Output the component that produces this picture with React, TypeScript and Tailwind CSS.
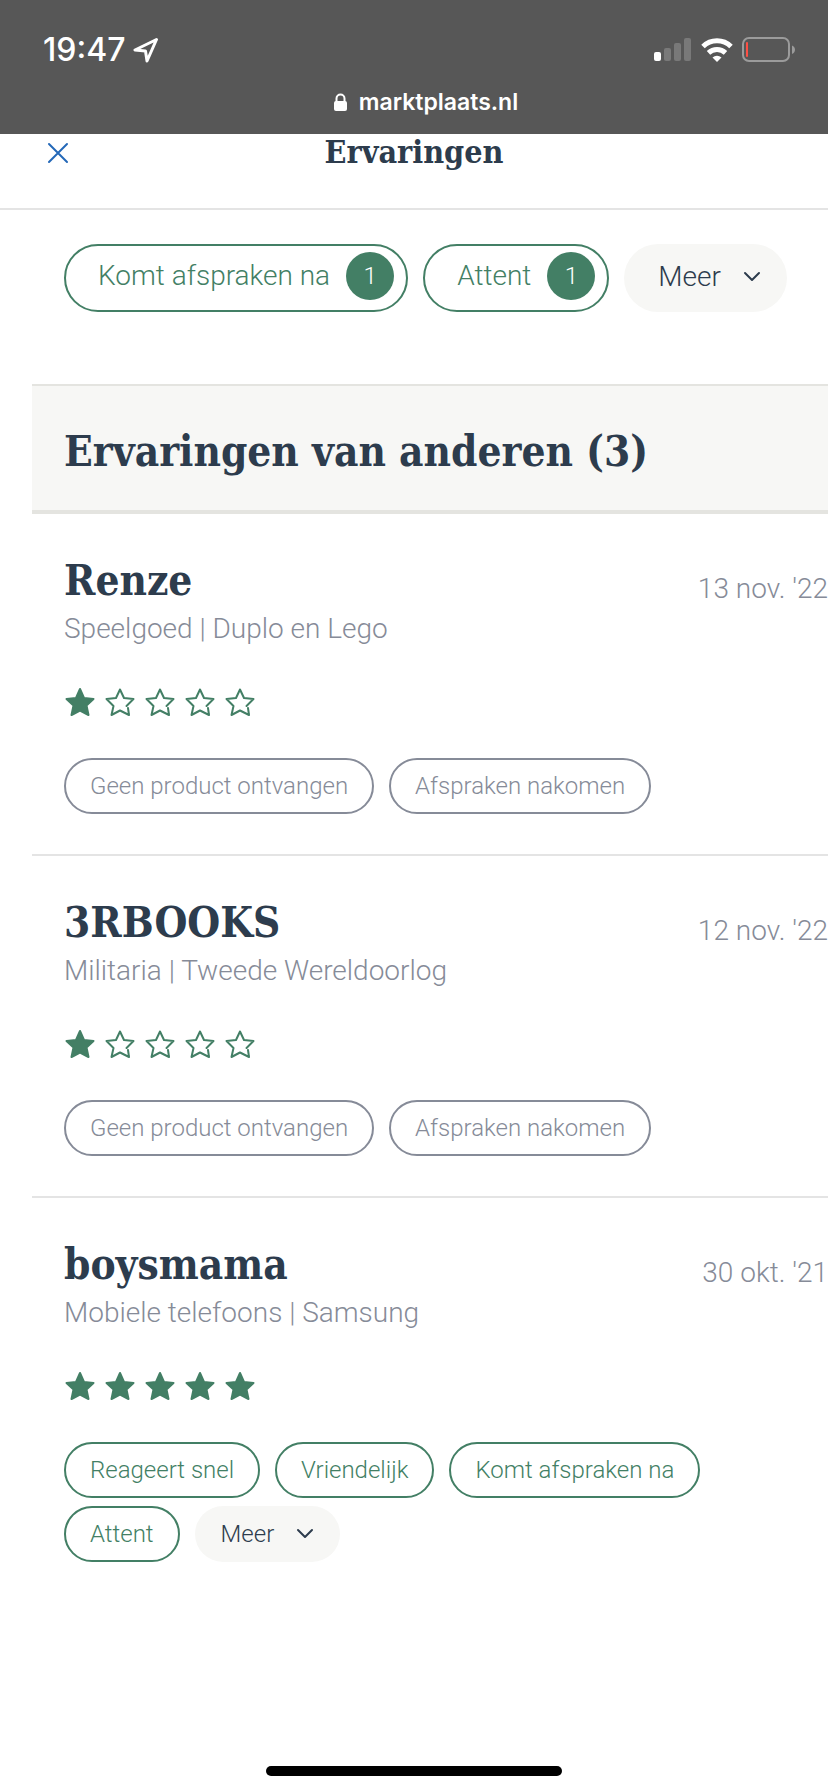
import React from 'react';

interface Review {
  name: string;
  category: string;
  date: string;
  stars: number;
  tags: string[];
  positive?: boolean;
  more?: boolean;
}

const reviews: Review[] = [
  {
    name: 'Renze',
    category: 'Speelgoed | Duplo en Lego',
    date: "13 nov. '22",
    stars: 1,
    tags: ['Geen product ontvangen', 'Afspraken nakomen']
  },
  {
    name: '3RBOOKS',
    category: 'Militaria | Tweede Wereldoorlog',
    date: "12 nov. '22",
    stars: 1,
    tags: ['Geen product ontvangen', 'Afspraken nakomen']
  },
  {
    name: 'boysmama',
    category: 'Mobiele telefoons | Samsung',
    date: "30 okt. '21",
    stars: 5,
    tags: ['Reageert snel', 'Vriendelijk', 'Komt afspraken na', 'Attent'],
    positive: true,
    more: true
  }
];

const summary = [
  { label: 'Komt afspraken na', count: 1 },
  { label: 'Attent', count: 1 }
];

const Chevron: React.FC = () => (
  <svg width="18" height="12" viewBox="0 0 18 12" fill="none" stroke="currentColor" strokeWidth="2" strokeLinecap="round" strokeLinejoin="round" aria-hidden="true">
    <path d="M2 2l7 7 7-7" />
  </svg>
);

const Star: React.FC<{ filled: boolean }> = ({ filled }) => (
  <svg width="32" height="32" viewBox="0 0 32 32" fill={filled ? 'currentColor' : 'none'} stroke="currentColor" strokeWidth="2" strokeLinecap="round" strokeLinejoin="round" aria-hidden="true">
    {filled ? (
      <path d="M16 3l4 9 9.500 1-7 6.500 2 9.500-8.500-4.500L7.500 29l2-9.500-7-6.500 9.500-1z" />
    ) : (
      <path d="M22.500 20l7-7-9.500-1-4-8.500-4 8.500-9.500 1 7 7-2 9 8.500-4.500 9 4.500-1-7" />
    )}
  </svg>
);

const StatusBar: React.FC = () => (
  <header className="bg-[#575757] text-white h-[134px] flex flex-col justify-between pt-8 pb-4">
    <div className="flex items-center justify-between pl-[43px] pr-8">
      <div className="flex items-center gap-2">
        <span className="font-['Inter',sans-serif] text-[32px] leading-9 font-medium">19:47</span>
        <svg width="26" height="26" viewBox="0 0 26 26" fill="none" stroke="currentColor" strokeWidth="3" strokeLinejoin="round" aria-hidden="true">
          <path d="M23.500 2.500L2 13l10.500 1L14 24z" />
        </svg>
      </div>
      <div className="flex items-center gap-[9px]">
        <svg width="38" height="24" viewBox="0 0 38 24" fill="currentColor" aria-hidden="true">
          <rect x="0" y="14" width="7" height="9" rx="2" />
          <g opacity="0.2">
            <rect x="10" y="10" width="7" height="13" rx="2" />
            <rect x="20" y="5" width="7" height="18" rx="2" />
            <rect x="30" y="0" width="7" height="23" rx="2" />
          </g>
        </svg>
        <svg width="32" height="24" viewBox="0 0 32 24" fill="none" stroke="currentColor" strokeWidth="5" aria-hidden="true">
          <path d="M2 8.500a20 20 0 0 1 28 0" />
          <path d="M7.500 14.800a12.500 12.500 0 0 1 17 0" />
          <path d="M11.500 19.500a7 7 0 0 1 9 0L16 24z" fill="currentColor" stroke="none" />
        </svg>
        <svg width="54" height="26" viewBox="0 0 54 26" fill="none" aria-hidden="true">
          <rect x="1" y="1" width="46" height="23" rx="6" stroke="#9b9b9b" strokeWidth="2" />
          <path d="M50 8.500c4 1.500 4 7 0 8.500z" fill="#9b9b9b" />
          <rect x="4" y="5" width="2" height="15" rx="1" fill="#ff4f44" />
        </svg>
      </div>
    </div>
    <div className="flex items-center justify-center gap-3 pl-6">
      <svg width="13" height="18" viewBox="0 0 13 18" fill="none" aria-hidden="true">
        <rect x="0" y="8" width="13" height="10" rx="2" fill="currentColor" />
        <path d="M2.500 9V5.500a4 4 0 0 1 8 0V9" stroke="currentColor" strokeWidth="2" />
      </svg>
      <span className="font-['Inter',sans-serif] text-[23px] leading-8 font-semibold">marktplaats.nl</span>
    </div>
  </header>
);

const Stars: React.FC<{ value: number }> = ({ value }) => (
  <div role="img" aria-label={`${value} van 5 sterren`} className="flex gap-2 text-[#437f65]">
    {[1, 2, 3, 4, 5].map((n) => (
      <Star key={n} filled={n <= value} />
    ))}
  </div>
);

const ReviewItem: React.FC<{ review: Review }> = ({ review }) => (
  <li className="ml-8 pl-8 pt-[39px] pb-10 border-b-2 border-[#e4e4e4] last:border-b-0">
    <div className="flex items-center justify-between">
      <h3 className="font-['DejaVu_Serif_Condensed','DejaVu_Serif',serif] text-[42px] leading-[56px] font-bold text-[#2d3c4d]">{review.name}</h3>
      <time className="pt-4 leading-10 text-[#868b98]">{review.date}</time>
    </div>
    <p className="leading-10 text-[#868b98]">{review.category}</p>
    <div className="pt-[37px] pb-10">
      <Stars value={review.stars} />
    </div>
    <ul className="flex flex-wrap gap-x-[15px] gap-y-2 pr-20 text-2xl">
      {review.tags.map((tag) => (
        <li
          key={tag}
          className={`h-14 flex items-center rounded-full border-2 px-6 ${
            review.positive ? 'border-[#437f65] text-[#437f65]' : 'border-[#868b98] text-[#868b98]'
          }`}
        >
          {tag}
        </li>
      ))}
      {review.more && (
        <li>
          <button type="button" className="h-14 flex items-center gap-[22px] rounded-full bg-[#f7f7f5] px-[26px]">
            Meer
            <Chevron />
          </button>
        </li>
      )}
    </ul>
  </li>
);

const App: React.FC = () => {
  return (
    <div className="min-h-screen flex flex-col bg-white font-['Roboto',sans-serif] font-light text-[28px] text-[#2d3c4d]">
      <StatusBar />
      <div className="grid grid-cols-[1fr_auto_1fr] items-start border-b-2 border-[#e4e4e4] h-[76px]">
        <button type="button" aria-label="Sluiten" className="ml-[46px] mt-2 w-6 text-[#2468b8]">
          <svg width="24" height="24" viewBox="0 0 24 24" stroke="currentColor" strokeWidth="2" strokeLinecap="round" aria-hidden="true">
            <path d="M3 2l18 18M21 2L3 20" />
          </svg>
        </button>
        <h1 className="font-['DejaVu_Serif_Condensed','DejaVu_Serif',serif] text-[32px] leading-9 font-bold">Ervaringen</h1>
      </div>

      <main>
        <div className="flex flex-wrap gap-[15px] pl-16 pt-[34px] pb-[72px]">
          {summary.map((item) => (
            <div key={item.label} className="h-[68px] flex items-center gap-4 rounded-full border-2 border-[#437f65] pl-8 pr-3 pb-1 text-[#437f65]">
              {item.label}
              <span className="w-12 h-12 flex items-center justify-center rounded-full bg-[#437f65] text-2xl text-white">{item.count}</span>
            </div>
          ))}
          <button type="button" className="h-[68px] flex items-center gap-[22px] rounded-full bg-[#f7f7f5] pl-[34px] pr-[26px] pb-0.5">
            Meer
            <Chevron />
          </button>
        </div>

        <h2 className="ml-8 pl-8 pt-9 pb-7 border-t-2 border-b-4 border-[#e4e4e0] bg-[#f7f7f5] font-['DejaVu_Serif_Condensed','DejaVu_Serif',serif] text-[42px] leading-[60px] font-bold">
          Ervaringen van anderen (3)
        </h2>
        <ul>
          {reviews.map((review) => (
            <ReviewItem key={review.name} review={review} />
          ))}
        </ul>
      </main>

      <div className="mt-auto mb-4 mx-auto w-[296px] h-[10px] rounded-full bg-black" />
    </div>
  );
};

export default App;
